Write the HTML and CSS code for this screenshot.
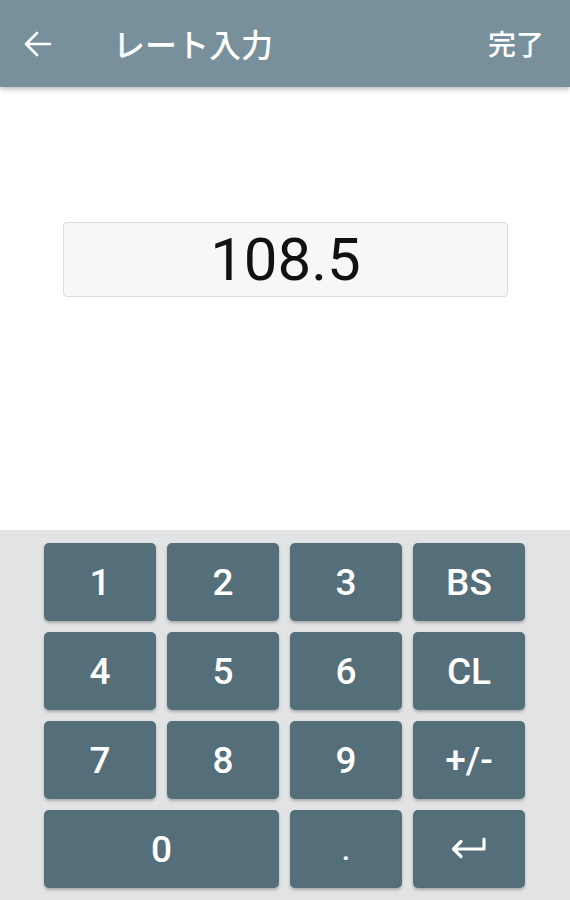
FILE: index.html
```html
<!DOCTYPE html>
<html lang="ja">
<head>
    <meta charset="UTF-8">
    <title>レート入力</title>
    <link rel="stylesheet" href="styles.css">
</head>
<body>

    <header class="toolbar">
        <button class="back-btn" aria-label="戻る">
            <svg width="30" height="28" viewBox="0 0 30 28">
                <path d="M27 14H4M14 3L3 14l11 11" fill="none" stroke="#fff" stroke-width="2.6" stroke-linecap="round" stroke-linejoin="round"/>
            </svg>
        </button>
        <h1 class="title">レート入力</h1>
        <span class="done">完了</span>
    </header>

    <main class="display-area">
        <div class="rate-box">108.5</div>
    </main>

    <section class="keypad">
        <button class="key">1</button>
        <button class="key">2</button>
        <button class="key">3</button>
        <button class="key">BS</button>
        <button class="key">4</button>
        <button class="key">5</button>
        <button class="key">6</button>
        <button class="key">CL</button>
        <button class="key">7</button>
        <button class="key">8</button>
        <button class="key">9</button>
        <button class="key">+/-</button>
        <button class="key wide">0</button>
        <button class="key dot">.</button>
        <button class="key" aria-label="決定">
            <svg width="38" height="24" viewBox="0 0 38 24">
                <path d="M34 2v10H4M11 4.5L3.5 12l7.5 7.5" fill="none" stroke="#fff" stroke-width="3.2" stroke-linecap="round" stroke-linejoin="round"/>
            </svg>
        </button>
    </section>

</body>
</html>
```

FILE: styles.css
```css
body {
    margin: 0;
    height: 900px;
    display: flex;
    flex-direction: column;
    background-color: #fff;
    font-family: Roboto, "Noto Sans CJK JP", sans-serif;
    overflow: hidden;
}
.toolbar {
    height: 87px;
    flex: none;
    display: flex;
    align-items: center;
    background-color: #78909c;
    color: #fff;
    box-shadow: 0 2px 5px rgba(0,0,0,0.28);
    position: relative;
    z-index: 1;
}
.back-btn {
    margin-left: 23px;
    padding: 0;
    border: none;
    background: none;
    display: flex;
}
.title {
    margin: 0 0 2px 60px;
    font-family: "Noto Sans CJK JP", sans-serif;
    font-size: 32px;
    font-weight: 500;
    flex: 1;
}
.done {
    margin: 0 26px 2px 0;
    font-family: "Noto Sans CJK JP", sans-serif;
    font-size: 28px;
    font-weight: 500;
}
.display-area {
    flex: 1;
    padding: 135px 62px 0 63px;
}
.rate-box {
    height: 73px;
    border: 1px solid #dcdcdc;
    border-radius: 4px;
    background-color: #f7f7f7;
    display: flex;
    align-items: center;
    justify-content: center;
    font-size: 60px;
    color: #111;
}
.keypad {
    flex: none;
    height: 345px;
    padding: 13px 45px 12px 44px;
    background-color: #e1e3e5;
    display: grid;
    grid-template-columns: repeat(4, 112px);
    grid-template-rows: repeat(4, 78px);
    gap: 11px;
}
.key {
    border: none;
    border-radius: 5px;
    background-color: #546e7a;
    color: #fff;
    font-family: Roboto, sans-serif;
    font-size: 37px;
    font-weight: 500;
    padding: 0;
    display: flex;
    align-items: center;
    justify-content: center;
    box-shadow: 0 2px 3px rgba(0,0,0,0.25);
}
.wide {
    grid-column: span 2;
}
.dot {
    font-size: 30px;
}
```
